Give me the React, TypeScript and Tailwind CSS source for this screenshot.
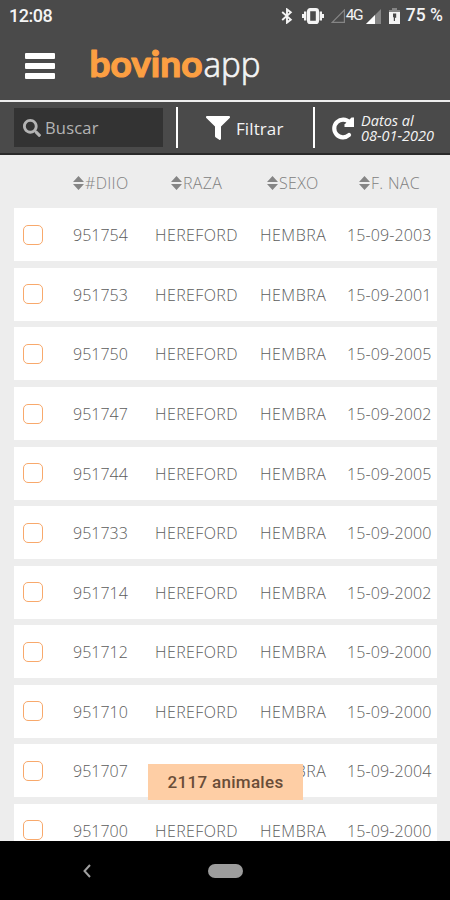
import { FaFilter, FaSearch } from "react-icons/fa";

const animals = [
  { diio: "951754", born: "15-09-2003" },
  { diio: "951753", born: "15-09-2001" },
  { diio: "951750", born: "15-09-2005" },
  { diio: "951747", born: "15-09-2002" },
  { diio: "951744", born: "15-09-2005" },
  { diio: "951733", born: "15-09-2000" },
  { diio: "951714", born: "15-09-2002" },
  { diio: "951712", born: "15-09-2000" },
  { diio: "951710", born: "15-09-2000" },
  { diio: "951707", born: "15-09-2004" },
  { diio: "951700", born: "15-09-2000" },
];

function StatusBar() {
  return (
    <div className="flex h-8 items-center pl-[9px] pr-[7px] font-[Roboto,sans-serif] font-medium text-[#f4f4f4]">
      <span className="text-[18px] leading-none tracking-[-0.5px]">12:08</span>
      <div className="ml-auto flex items-center">
        <svg className="mr-[9px] h-[16px] w-[12px]" viewBox="0 0 12 16" fill="none" stroke="currentColor" strokeWidth="1.9">
          <path d="M1.2 4 9.8 11.6 6 14.6V1.4l3.8 3L1.2 12" />
        </svg>
        <svg className="mr-[7px] h-4 w-[22px]" viewBox="0 0 22 16" fill="none" stroke="currentColor">
          <rect x="6.6" y="1.6" width="8.8" height="12.8" rx="1.5" strokeWidth="3.2" />
          <path d="M3.2 3.5v9M18.8 3.5v9" strokeWidth="2.4" />
          <path d="M1 6v4M21 6v4" strokeWidth="2" />
        </svg>
        <svg className="h-[14px] w-[14px]" viewBox="0 0 14 14" fill="none" stroke="#858585">
          <path d="M1.2 13.3 13.4 1v12.3z" strokeWidth="1.2" />
        </svg>
        <span className="ml-[1px] inline-block w-[17px] text-[15.5px] leading-none font-normal tracking-[-1.6px]">4G</span>
        <svg className="ml-[3px] h-[15px] w-[15px]" viewBox="0 0 15 15">
          <path d="M0 15 15 0v15z" fill="#858585" />
          <path d="M0 15 9 6v9z" fill="#fff" />
        </svg>
        <svg className="ml-[8px] h-[16px] w-[11px]" viewBox="0 0 11 16">
          <path d="M3 0h5v2h3v5H0V2h3z" fill="#858585" />
          <path d="M0 4h11v12H0z" fill="#f4f4f4" />
          <path d="M4 5.5h3.2v4.2H6V13H4.8V9.7L4 8.8z" fill="#4a4a4a" />
        </svg>
        <span className="ml-[6px] text-[17.5px] leading-none whitespace-nowrap">75 %</span>
      </div>
    </div>
  );
}

function Header() {
  return (
    <header className="flex h-[68px] items-start pl-[25px]">
      <div className="mt-[21px] flex w-[30px] flex-col gap-[4px]">
        <span className="h-[6px] rounded-[1px] bg-white" />
        <span className="h-[6px] rounded-[1px] bg-white" />
        <span className="h-[6px] rounded-[1px] bg-white" />
      </div>
      <svg className="ml-[33px] mt-[8px] h-12 w-[176px]" viewBox="0 0 176 48">
        <text x="1.5" y="36.8" fontFamily="Lato, sans-serif" fontSize="36.5" fontWeight="700" fill="#fc9f42" stroke="#fc9f42" strokeWidth="1.2" strokeLinejoin="round" textLength="113" lengthAdjust="spacingAndGlyphs">
          bovino
        </text>
        <text x="115.5" y="37" fontFamily="'Open Sans', sans-serif" fontSize="34" fontWeight="300" fill="#f4f4f4" stroke="#f4f4f4" strokeWidth="0.7" textLength="57" lengthAdjust="spacingAndGlyphs">
          app
        </text>
      </svg>
    </header>
  );
}

function Toolbar() {
  return (
    <div className="flex h-[55px] items-center border-t-2 border-b-2 border-t-[#eeeeee] border-b-[#2a2a2a] pl-[14px] text-[#f4f4f4]">
      <div className="flex h-[39px] w-[149px] items-center bg-[#333333] pl-[9px] text-[#b4b4b4]">
        <FaSearch className="size-[18px]" />
        <span className="ml-[4px] pt-px text-[16.5px] tracking-[0.2px]">Buscar</span>
      </div>
      <span className="ml-[13px] h-[41px] w-[2px] bg-white" />
      <FaFilter className="ml-[28px] size-[24px] text-white" />
      <span className="ml-[6px] w-[49px] pt-[3px] text-[17px] font-medium tracking-[0.1px]">Filtrar</span>
      <span className="ml-[28px] h-[41px] w-[2px] bg-white" />
      <svg className="ml-[16px] h-[24px] w-[24px]" viewBox="0 0 24 24" fill="none">
        <path d="M18.5 6.5a8.8 8.8 0 1 0-.5 12.5" stroke="#fff" strokeWidth="4.2" strokeLinecap="round" />
        <path d="M23 1.5V11h-9.5V8.5l7-7z" fill="#fff" />
      </svg>
      <div className="ml-[6px] flex flex-col pt-px text-[14.5px] leading-[15px] whitespace-nowrap italic">
        <span>Datos al</span>
        <span>08-01-2020</span>
      </div>
    </div>
  );
}

function ColumnTitle({ label }: { label: string }) {
  return (
    <span className="flex items-center tracking-[0.3px] whitespace-nowrap">
      <svg className="mr-px h-[14px] w-[11px]" viewBox="0 0 11 14" fill="#858585">
        <path d="M5.5 0 11 6H0zM0 8h11l-5.5 6z" />
      </svg>
      {label}
    </span>
  );
}

export default function App() {
  return (
    <div className="flex h-[900px] w-[450px] flex-col overflow-hidden bg-[#4a4a4a] font-['Open_Sans','Noto_Sans',sans-serif]">
      <StatusBar />
      <Header />
      <Toolbar />
      <main className="relative min-h-0 flex-1 overflow-hidden bg-[#ededed] px-[14px] pr-[13px] text-[16px] font-light text-[#5c5c5c]">
        <div className="grid h-[53.4px] grid-cols-[98px_96px_92px_1fr] items-center pt-[2px] pl-[59px] text-[#808080]">
          <ColumnTitle label="#DIIO" />
          <ColumnTitle label="RAZA" />
          <ColumnTitle label="SEXO" />
          <ColumnTitle label="F. NAC" />
        </div>
        <div className="flex flex-col gap-[6.55px]">
          {animals.map((animal) => (
            <div key={animal.diio} className="grid h-[53px] shrink-0 grid-cols-[50px_82px_105px_87px_1fr] items-center bg-white pl-[9px] whitespace-nowrap">
              <span className="size-5 rounded-[5px] border-[1.5px] border-[#f8a96c]" />
              <span className="pt-px">{animal.diio}</span>
              <span className="pt-px tracking-[0.4px]">HEREFORD</span>
              <span className="pt-px tracking-[0.5px]">HEMBRA</span>
              <span className="pt-px tracking-[0.1px]">{animal.born}</span>
            </div>
          ))}
        </div>
        <div className="absolute bottom-[41px] left-[148px] flex h-9 w-[155px] items-center justify-center bg-[#fecea5] pt-[2px] font-[Roboto,sans-serif] text-[17px] font-medium tracking-[0.3px] text-[#694d38]">
          2117 animales
        </div>
      </main>
      <nav className="flex h-[59px] shrink-0 items-center bg-black pl-[83px]">
        <svg className="h-[14px] w-[8px]" viewBox="0 0 8 14" fill="none" stroke="#a0a0a0" strokeWidth="2">
          <path d="M7 1 1.5 7 7 13" />
        </svg>
        <span className="ml-[117px] h-[14px] w-[35px] rounded-full bg-[#9c9c9c]" />
      </nav>
    </div>
  );
}
